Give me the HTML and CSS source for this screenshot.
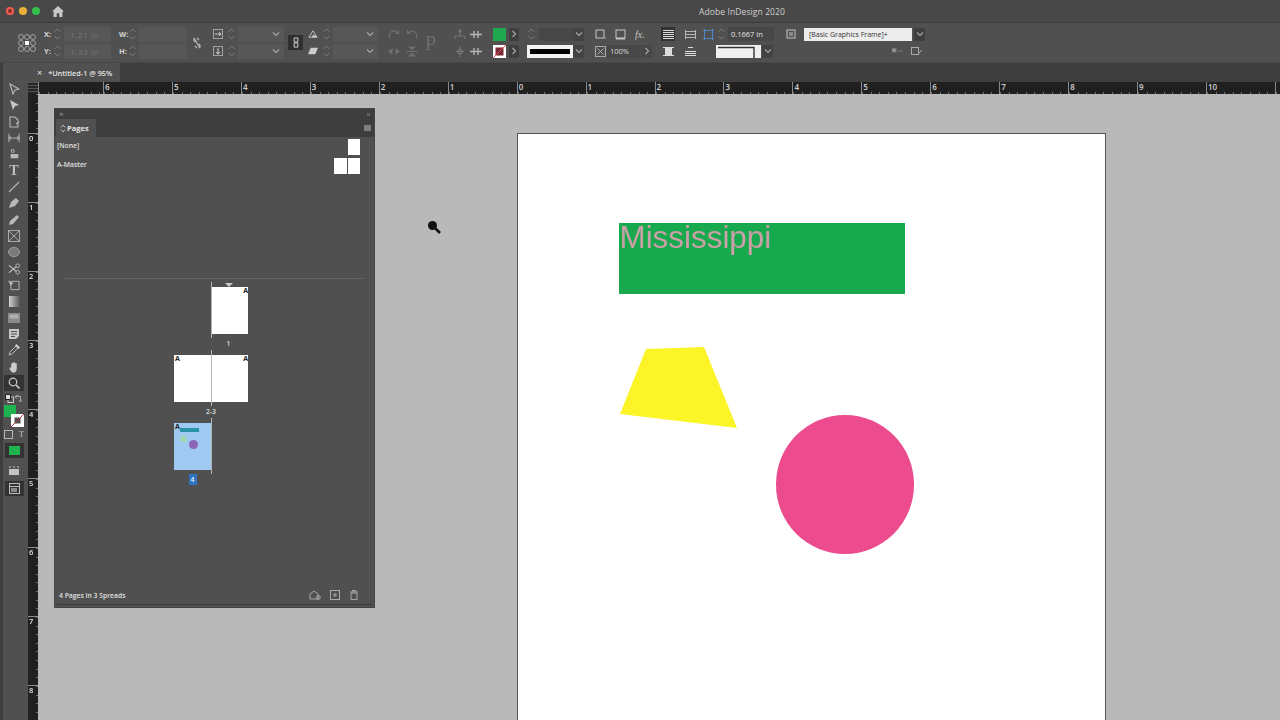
FILE: index.html
```html
<!DOCTYPE html>
<html lang="en">
<head>
<meta charset="utf-8">
<title>Adobe InDesign 2020</title>
<link rel="stylesheet" href="styles.css">
</head>
<body>
<svg class="defs" width="0" height="0" aria-hidden="true">
  <defs>
    <symbol id="chev" viewBox="0 0 8 8"><path d="M1 2.5 4 5.5 7 2.5" fill="none" stroke="currentColor" stroke-width="1.2"/></symbol>
    <symbol id="next" viewBox="0 0 8 8"><path d="M2.5 1 5.5 4 2.5 7" fill="none" stroke="currentColor" stroke-width="1.2"/></symbol>
    <symbol id="spin" viewBox="0 0 9 14"><path d="M1.5 5 4.5 2 7.5 5M1.5 9 4.5 12 7.5 9" fill="none" stroke="currentColor" stroke-width="1"/></symbol>
  </defs>
</svg>

<div class="app">
<header class="titlebar">
  <div class="lights"><i class="light red"></i><i class="light amber"></i><i class="light green"></i></div>
  <svg class="home" viewBox="0 0 12 11"><path d="M6 0 12 5.500H10.400V11H7.300V7.300H4.700V11H1.600V5.500H0Z" fill="#c8c8c8"/></svg>
  <div class="apptitle">Adobe InDesign 2020</div>
</header>

<section class="control">
  <svg class="refpoint" viewBox="0 0 18 18">
    <g fill="none" stroke="#a0a0a0" stroke-width="1"><circle cx="3" cy="3" r="2.500"/><circle cx="9" cy="3" r="2.500"/><circle cx="15" cy="3" r="2.500"/><circle cx="3" cy="9" r="2.500"/><circle cx="15" cy="9" r="2.500"/><circle cx="3" cy="15" r="2.500"/><circle cx="9" cy="15" r="2.500"/><circle cx="15" cy="15" r="2.500"/></g>
    <rect x="7" y="7" width="4" height="4" fill="#fff"/>
  </svg>

  <div class="col g-xy">
    <div class="row"><b class="lab">X:</b><svg class="spin"><use href="#spin"/></svg><span class="field dim w-47">-1.21 in</span></div>
    <div class="row"><b class="lab">Y:</b><svg class="spin"><use href="#spin"/></svg><span class="field dim w-47">-1.33 in</span></div>
  </div>
  <div class="col g-wh">
    <div class="row"><b class="lab">W:</b><svg class="spin"><use href="#spin"/></svg><span class="field w-48"></span></div>
    <div class="row"><b class="lab">H:</b><svg class="spin"><use href="#spin"/></svg><span class="field w-48"></span></div>
  </div>
  <svg class="unlink" viewBox="0 0 10 12"><path d="M2 1 8 11M3 1C1 2 2 4 3 5M7 11C9 10 8 8 7 7M7 3 5 1M3 9 5 11" fill="none" stroke="#b5b5b5" stroke-width="1.300"/></svg>
  <div class="col g-scale">
    <div class="row"><svg class="ic10" viewBox="0 0 11 11"><rect x=".5" y=".5" width="10" height="10" fill="none" stroke="#aaa"/><path d="M2 5.500H8M6.500 3.500 9 5.500 6.500 7.500" fill="none" stroke="#ddd"/></svg><svg class="spin gap4"><use href="#spin"/></svg><span class="field w-46 chev"><svg class="chv"><use href="#chev"/></svg></span></div>
    <div class="row"><svg class="ic10" viewBox="0 0 11 11"><rect x=".5" y=".5" width="10" height="10" fill="none" stroke="#aaa"/><path d="M5.500 2V8M3.500 6.500 5.500 9 7.500 6.500" fill="none" stroke="#ddd"/></svg><svg class="spin gap4"><use href="#spin"/></svg><span class="field w-46 chev"><svg class="chv"><use href="#chev"/></svg></span></div>
  </div>
  <div class="chain"><svg viewBox="0 0 6 12"><path d="M1 1H5V5.500H1ZM1 6.500H5V11H1Z" fill="none" stroke="#ddd"/></svg></div>
  <div class="col g-shear">
    <div class="row"><svg class="ic10" viewBox="0 0 11 11"><path d="M1 9 5.500 2 10 9Z" fill="none" stroke="#ccc"/><path d="M6 6 10 9H4Z" fill="#ccc"/></svg><svg class="spin gap4"><use href="#spin"/></svg><span class="field w-45 chev"><svg class="chv"><use href="#chev"/></svg></span></div>
    <div class="row"><svg class="ic10" viewBox="0 0 11 11"><path d="M3 2H11L8 9H0Z" fill="#ccc"/></svg><svg class="spin gap4"><use href="#spin"/></svg><span class="field w-45 chev"><svg class="chv"><use href="#chev"/></svg></span></div>
  </div>

  <div class="col g-rot">
    <div class="row gap6"><svg class="ic12" viewBox="0 0 12 11"><path d="M1.500 9V6C1.500 3 5 1 8 2.500L10 4M10.500 1V4.500H7" fill="none" stroke="#6f6f6f" stroke-width="1.200"/></svg><svg class="ic12" viewBox="0 0 12 11"><path d="M10.500 9V6C10.500 3 7 1 4 2.500L2 4M1.500 1V4.500H5" fill="none" stroke="#6f6f6f" stroke-width="1.200"/></svg></div>
    <div class="row gap6"><svg class="ic12" viewBox="0 0 12 11"><path d="M4.500 2V9L0 5.500ZM7.500 2V9L12 5.500Z" fill="#6f6f6f"/></svg><svg class="ic12" viewBox="0 0 12 11"><path d="M2 .5H10L6 4.500ZM2 10.500H10L6 6.500Z" fill="#6f6f6f"/><path d="M0 5.500H12" stroke="#6f6f6f"/></svg></div>
  </div>
  <div class="glyph-p">P</div>
  <div class="col g-dist">
    <div class="row gap4r"><svg class="ic12" viewBox="0 0 12 11"><path d="M6 0V3M1 10V7H11V10M6 3V7" fill="none" stroke="#777"/><circle cx="6" cy="2" r="1.500" fill="#777"/></svg><svg class="ic12" viewBox="0 0 12 11"><path d="M0 5.500H12M4 2V9M8 2V9" fill="none" stroke="#b5b5b5" stroke-width="1.400"/></svg></div>
    <div class="row gap4r"><svg class="ic12" viewBox="0 0 12 11"><path d="M6 0V11M2 5.500H10" fill="none" stroke="#777"/><circle cx="6" cy="5.500" r="2.500" fill="none" stroke="#777"/></svg><svg class="ic12" viewBox="0 0 12 11"><path d="M0 5.500H12M4 2V9M8 2V9" fill="none" stroke="#b5b5b5" stroke-width="1.400"/></svg></div>
  </div>
  <div class="col g-swatch">
    <div class="row gap3"><i class="swatch fill"></i><span class="nextbox"><svg class="chv"><use href="#next"/></svg></span></div>
    <div class="row gap3"><svg class="swatch stroke" viewBox="0 0 13 13"><rect width="13" height="13" fill="#fff"/><rect x="2.500" y="2.500" width="8" height="8" fill="#7c2a36"/><path d="M0 13 13 0" stroke="#e04a4a"/></svg><span class="nextbox"><svg class="chv"><use href="#next"/></svg></span></div>
  </div>
  <div class="col g-stroke">
    <div class="row"><svg class="spin mr3"><use href="#spin"/></svg><span class="field w-34"></span><span class="chevbox"><svg class="chv"><use href="#chev"/></svg></span></div>
    <div class="row"><span class="strokepick"><i></i></span><span class="chevbox"><svg class="chv"><use href="#chev"/></svg></span></div>
  </div>
  <div class="col g-fx">
    <div class="row gap9"><svg class="ic11" viewBox="0 0 11 11"><rect x="1" y="1" width="8" height="8" fill="none" stroke="#c4c4c4"/><path d="M10 9H11" stroke="#c4c4c4"/></svg><svg class="ic11" viewBox="0 0 11 11"><rect x="1" y="1" width="9" height="8" fill="none" stroke="#c4c4c4"/><path d="M1 9H10V10.500H1Z" fill="#c4c4c4"/></svg><i class="fx">fx.</i></div>
    <div class="row"><svg class="ic11" viewBox="0 0 11 11"><rect x=".5" y=".5" width="10" height="10" fill="none" stroke="#aaa"/><path d="M2.500 2.500 8.500 8.500M8.500 2.500 2.500 8.500" stroke="#aaa"/></svg><span class="field pct">100%</span><span class="nextbox slim"><svg class="chv"><use href="#next"/></svg></span></div>
  </div>
  <div class="col g-wrap">
    <div class="row gap8"><span class="wrapbtn on"><svg viewBox="0 0 11 9"><path d="M0 .5H11M0 2.500H11M0 4.500H11M0 6.500H11M0 8.500H11" stroke="#ddd"/></svg></span><span class="wrapbtn"><svg viewBox="0 0 11 9"><path d="M.5 0V9M10.500 0V9M0 1.500H11M0 4.500H11M0 7.500H11" stroke="#b5b5b5"/></svg></span></div>
    <div class="row gap8"><span class="wrapbtn"><svg viewBox="0 0 11 9"><rect x="2" y="1" width="7" height="7" fill="#ddd"/><path d="M0 .5H11M0 8.500H11" stroke="#ddd"/></svg></span><span class="wrapbtn"><svg viewBox="0 0 11 9"><path d="M3 .5H8M0 4.500H11M0 6.500H11M0 8.500H11" stroke="#ddd"/></svg></span></div>
  </div>
  <div class="col g-inset">
    <div class="row"><svg class="ic11" viewBox="0 0 11 11"><rect x="1.500" y="1.500" width="8" height="8" fill="none" stroke="#4e88c4"/><path d="M0 1.500H3M8 1.500H11M0 9.500H3M8 9.500H11M1.500 0V3M9.500 0V3M1.500 8V11M9.500 8V11" stroke="#4e88c4"/></svg><svg class="spin gap3l"><use href="#spin"/></svg><span class="field val">0.1667 in</span></div>
    <div class="row"><span class="cornerpick"><svg viewBox="0 0 45 13"><path d="M2 2.500H38V13" fill="none" stroke="#333" stroke-width="1.400"/></svg></span><span class="chevbox"><svg class="chv"><use href="#chev"/></svg></span></div>
  </div>
  <div class="col g-style">
    <div class="row"><svg class="ic11" viewBox="0 0 11 11"><rect x="1" y="1" width="8" height="8" fill="none" stroke="#c4c4c4"/><rect x="3" y="3" width="4" height="4" fill="#8a8a8a"/></svg><span class="stylebox">[Basic Graphics Frame]+</span><span class="chevbox dark"><svg class="chv"><use href="#chev"/></svg></span></div>
    <div class="row endrow"><svg class="ic12" viewBox="0 0 12 9"><path d="M0 1.500H4V5H0ZM6 4H11" fill="#9a9a9a" stroke="#777"/></svg><svg class="ic12" viewBox="0 0 12 9"><rect x=".5" y=".5" width="7" height="7" fill="none" stroke="#aaa"/><path d="M8 6 11 3" stroke="#aaa"/></svg></div>
  </div>
</section>

<div class="workspace">
  <aside class="toolbar">
    <div class="grip"></div>
    <div class="tools">
      <div class="tool"><svg viewBox="0 0 12 12"><path d="M2 1 11 6 7 7 5 11Z" fill="none" stroke="#b8b8b8" stroke-width="1.100"/></svg></div>
      <div class="tool"><svg viewBox="0 0 12 12"><path d="M2 1 11 6 7 7 5 11Z" fill="#c8c8c8"/></svg></div>
      <div class="tool"><svg viewBox="0 0 12 12"><path d="M2 1H7L10 4V11H2ZM8 8 11 6" fill="none" stroke="#b8b8b8" stroke-width="1.100"/></svg></div>
      <div class="tool"><svg viewBox="0 0 14 12"><path d="M1 1V11M13 1V11M1 6H13M3.500 4 1 6 3.500 8M10.500 4 13 6 10.500 8" fill="none" stroke="#b8b8b8" stroke-width="1.100"/></svg></div>
      <div class="tool"><svg viewBox="0 0 14 12"><path d="M3 6H12V11H3Z" fill="#b8b8b8"/><path d="M4 1H7V4H4Z" fill="none" stroke="#b8b8b8"/></svg></div>
      <div class="tool type">T</div>
      <div class="tool"><svg viewBox="0 0 12 12"><path d="M1 11 11 1" stroke="#b8b8b8" stroke-width="1.100"/></svg></div>
      <div class="tool"><svg viewBox="0 0 12 12"><path d="M1 11 3 5 8 1 11 4 7 9Z" fill="#b8b8b8"/></svg></div>
      <div class="tool"><svg viewBox="0 0 12 12"><path d="M1 11 2 7 9 1 11 3 5 10Z" fill="#b8b8b8"/></svg></div>
      <div class="tool"><svg viewBox="0 0 12 12"><rect x=".5" y=".5" width="11" height="11" fill="none" stroke="#a8a8a8"/><path d="M.5 .5 11.500 11.500M11.500 .5 .5 11.500" stroke="#a8a8a8"/></svg></div>
      <div class="tool"><svg viewBox="0 0 13 11"><ellipse cx="6.500" cy="5.500" rx="6" ry="5" fill="#7a7a7a" stroke="#a0a0a0"/></svg></div>
      <div class="tool"><svg viewBox="0 0 13 12"><circle cx="10.500" cy="2.500" r="2" fill="none" stroke="#b8b8b8"/><circle cx="10.500" cy="9.500" r="2" fill="none" stroke="#b8b8b8"/><path d="M1 2 9 8.500M1 10 9 3.500" stroke="#c8c8c8" stroke-width="1.200"/></svg></div>
      <div class="tool"><svg viewBox="0 0 13 12"><path d="M3 2H12V11H3Z" fill="none" stroke="#b8b8b8"/><path d="M0 1 6 4 4 5 3.500 7Z" fill="#c8c8c8"/></svg></div>
      <div class="tool"><i class="grad"></i></div>
      <div class="tool"><svg viewBox="0 0 12 10"><rect width="12" height="10" fill="#8b8b8b"/><rect x="1.500" y="1.500" width="9" height="4" fill="#b0b0b0"/></svg></div>
      <div class="tool"><svg viewBox="0 0 12 12"><path d="M1 1H11V8L8 11H1Z" fill="#c8c8c8"/><path d="M3 3.500H9M3 6H9M3 8.500H7" stroke="#505050"/></svg></div>
      <div class="tool"><svg viewBox="0 0 12 12"><path d="M1 11 2 8 8 2 10 4 4 10Z" fill="none" stroke="#b8b8b8"/><path d="M7 1.500 8.500 0 12 3.500 10.500 5Z" fill="#c8c8c8"/></svg></div>
      <div class="tool"><svg viewBox="0 0 12 13"><path d="M3 7V2.500H4.500V6.500V1.500H6V6.500V1.500H7.500V6.500V2.500H9V8C9 11 7.500 12.500 5.500 12.500 3.500 12.500 2.500 11 1 8L1.500 7Z" fill="#cccccc"/></svg></div>
      <div class="tool on"><svg viewBox="0 0 12 12"><circle cx="5" cy="5" r="3.800" fill="none" stroke="#c8c8c8" stroke-width="1.200"/><path d="M8 8 11.500 11.500" stroke="#c8c8c8" stroke-width="1.600"/></svg></div>
    </div>
    <div class="defaults">
      <svg class="ic9" viewBox="0 0 9 9"><rect x="3" y="3" width="5.500" height="5.500" fill="none" stroke="#ccc"/><rect x=".5" y=".5" width="5" height="5" fill="#ddd" stroke="#222"/></svg>
      <svg class="ic9" viewBox="0 0 9 9"><path d="M1 2.500H6.500V8M4.500 1 1 2.500 2.500 4.500M5 6.500 6.500 8 8 6.500" fill="none" stroke="#aaa"/></svg>
    </div>
    <div class="fillstroke">
      <svg class="strokebox" viewBox="0 0 13 13"><rect width="13" height="13" fill="#fff"/><rect x="3.500" y="3.500" width="6" height="6" fill="#505050"/><path d="M0 13 13 0" stroke="#b8373f"/></svg>
      <i class="fillbox"></i>
    </div>
    <div class="mode">
      <svg class="ic9" viewBox="0 0 9 9"><rect x=".5" y=".5" width="8" height="8" fill="none" stroke="#b5b5b5"/></svg>
      <span class="modet">T</span>
    </div>
    <div class="applybox"><i></i></div>
    <div class="screen"><svg viewBox="0 0 12 10"><path d="M1 1H3M5 1H7M9 1H11" stroke="#c4c4c4"/><rect x="1" y="3" width="10" height="6" fill="#c4c4c4"/></svg></div>
    <div class="viewbox"><svg viewBox="0 0 11 11"><rect x=".5" y=".5" width="10" height="10" fill="none" stroke="#bbb"/><path d="M.5 3.500H10.500" stroke="#bbb"/><rect x="2" y="5" width="6" height="4" fill="#888"/></svg></div>
  </aside>

  <div class="main">
    <div class="tabs">
      <div class="tab"><span class="tabx">×</span><span>*Untitled-1 @ 95%</span></div>
    </div>
    <div class="hruler">
      <div class="corner"></div>
      <div class="hcell first"></div>
      <div class="hcell"><span>6</span></div><div class="hcell"><span>5</span></div><div class="hcell"><span>4</span></div><div class="hcell"><span>3</span></div><div class="hcell"><span>2</span></div><div class="hcell"><span>1</span></div><div class="hcell"><span>0</span></div><div class="hcell"><span>1</span></div><div class="hcell"><span>2</span></div><div class="hcell"><span>3</span></div><div class="hcell"><span>4</span></div><div class="hcell"><span>5</span></div><div class="hcell"><span>6</span></div><div class="hcell"><span>7</span></div><div class="hcell"><span>8</span></div><div class="hcell"><span>9</span></div><div class="hcell"><span>10</span></div><div class="hcell"></div>
    </div>
    <div class="stage">
      <div class="vruler">
        <div class="vcell first"></div>
        <div class="vcell">0</div><div class="vcell">1</div><div class="vcell">2</div><div class="vcell">3</div><div class="vcell">4</div><div class="vcell">5</div><div class="vcell">6</div><div class="vcell">7</div><div class="vcell">8</div>
      </div>
      <div class="canvas">
        <div class="page">
          <div class="frame">Mississippi</div>
          <svg class="trap" viewBox="0 0 118 82"><polygon points="27,2 85,0 118,81 1,67" fill="#fbf427"/></svg>
          <div class="circle"></div>
        </div>

        <div class="panel">
          <div class="panelhead"><span class="px">×</span><span class="pgrip">ıı</span></div>
          <div class="paneltabs">
            <div class="ptab"><svg class="updown" viewBox="0 0 6 9"><path d="M1 3.500 3 1 5 3.500M1 5.500 3 8 5 5.500" fill="none" stroke="#c4c4c4" stroke-width=".9"/></svg>Pages</div>
            <i class="pmenu"></i>
          </div>
          <div class="masters">
            <div class="master"><span>[None]</span><div class="mpages"><i class="mp"></i></div></div>
            <div class="master"><span>A-Master</span><div class="mpages"><i class="mp"></i><i class="mp"></i></div></div>
          </div>
          <div class="divider"></div>
          <div class="spreads">
            <div class="spread s1">
              <div class="slot"></div>
              <div class="slot"><div class="thumb"><em class="tr">A</em><i class="marker"></i></div></div>
            </div>
            <div class="plabel s1l">1</div>
            <div class="spread">
              <div class="slot"><div class="thumb"><em class="tl">A</em></div></div>
              <div class="slot"><div class="thumb"><em class="tr">A</em></div></div>
            </div>
            <div class="plabel">2-3</div>
            <div class="spread">
              <div class="slot"><div class="thumb blue"><em class="tl">A</em><i class="mini-bar"></i><i class="mini-tri"></i><i class="mini-dot"></i></div></div>
              <div class="slot"></div>
            </div>
            <div class="plabel l4"><span>4</span></div>
          </div>
          <div class="panelfoot">
            <span>4 Pages in 3 Spreads</span>
            <div class="footicons">
              <svg viewBox="0 0 12 10"><path d="M1 9V4L5 1 9 4V9ZM8 6H11V9H8Z" fill="none" stroke="#a8a8a8"/></svg>
              <svg viewBox="0 0 10 10"><rect x=".5" y=".5" width="9" height="9" fill="none" stroke="#a8a8a8"/><path d="M3 5H7M5 3V7" stroke="#a8a8a8"/></svg>
              <svg viewBox="0 0 10 10"><path d="M1 2H9M3.500 2V.5H6.500V2M2 3V9.500H8V3Z" fill="none" stroke="#a8a8a8"/></svg>
            </div>
          </div>
          <div class="panelgrip"></div>
        </div>

        <svg class="cursor" viewBox="0 0 14 14"><circle cx="5.500" cy="5.500" r="4.500" fill="#111"/><path d="M8.500 8.500 13 13" stroke="#111" stroke-width="2.600"/></svg>
      </div>
    </div>
  </div>
</div>
</div>
</body>
</html>
```

FILE: styles.css
```css
* { box-sizing: border-box; }
html, body { margin: 0; height: 100%; }
body {
  width: 1280px; height: 720px; overflow: hidden;
  background: #505050; color: #d8d8d8;
  font-family: "Open Sans", "Liberation Sans", sans-serif;
}
.app { width: 1280px; height: 720px; display: flex; flex-direction: column; filter: blur(.5px); }
svg { display: block; flex: none; }
.defs { position: absolute; }

.titlebar { height: 23px; flex: none; background: #484848; border-bottom: 1px solid #3a3a3a; display: flex; align-items: center; }
.lights { display: flex; gap: 5px; margin-left: 6px; }
.light { width: 8px; height: 8px; border-radius: 50%; display: block; }
.red { background: #ee5f57; box-shadow: inset 0 0 0 2px #ee5f57, inset 0 0 0 4px #8c2a2a; }
.amber { background: #e9b13a; }
.green { background: #36c04c; }
.home { width: 12px; height: 11px; margin-left: 12px; }
.apptitle { margin-left: 635px; font-size: 8.500px; color: #d0d0d0; letter-spacing: .1px; }

.control { height: 40px; flex: none; background: #505050; display: flex; align-items: center; border-bottom: 1px solid #474747; padding-left: 18px; font-size: 7.500px; }
.refpoint { width: 18px; height: 18px; }
.col { display: flex; flex-direction: column; height: 34px; flex: none; }
.row { display: flex; align-items: center; height: 17px; }
.lab { width: 9px; font-size: 7.500px; color: #d6d6d6; }
.spin { width: 9px; height: 14px; color: #7c7c7c; margin-right: 2px; }
.gap4 { margin-left: 4px; }
.gap3l { margin-left: 3px; }
.mr3 { margin-right: 3px; }
.field { height: 15px; background: #575757; display: flex; align-items: center; padding-left: 3px; color: #ddd; flex: none; }
.dim { color: #767676; font-size: 8px; letter-spacing: .6px; }
.w-47 { width: 47px; }
.w-48 { width: 48px; }
.w-46 { width: 46px; }
.w-45 { width: 45px; }
.w-34 { width: 34px; height: 13px; background: #474747; }
.chev { justify-content: flex-end; padding-right: 4px; }
.chv { width: 8px; height: 8px; color: #a5a5a5; }
.g-xy { margin-left: 8px; }
.g-wh { margin-left: 8px; }
.unlink { width: 10px; height: 12px; margin-left: 5px; }
.g-scale { margin-left: 11px; }
.ic10 { width: 10px; height: 10px; }
.ic11 { width: 11px; height: 11px; }
.ic12 { width: 12px; height: 11px; }
.ic9 { width: 9px; height: 9px; }
.chain { width: 15px; height: 15px; background: #2f2f2f; margin-left: 4px; display: flex; align-items: center; justify-content: center; }
.chain svg { width: 6px; height: 11px; }
.g-shear { margin-left: 5px; }
.g-rot { margin-left: 10px; }
.gap6 { gap: 6px; }
.gap4r { gap: 4px; }
.gap3 { gap: 3px; }
.gap8 { gap: 8px; }
.gap9 { gap: 9px; }
.glyph-p { width: 17px; margin-left: 7px; font-family: "Liberation Serif", serif; font-size: 20px; color: #6c6c6c; line-height: 1; }
.g-dist { margin-left: 12px; }
.swatch { width: 13px; height: 13px; display: block; }
.swatch.fill { background: #1fa84f; }
.nextbox { width: 10px; height: 13px; background: #3f3f3f; display: flex; align-items: center; justify-content: center; }
.g-swatch { margin-left: 11px; }
.g-stroke { margin-left: 8px; }
.chevbox { width: 11px; height: 13px; background: #434343; display: flex; align-items: center; justify-content: center; flex: none; }
.strokepick { width: 46px; height: 13px; background: #f3f3f3; display: flex; align-items: center; padding: 0 3px; flex: none; }
.strokepick i { display: block; width: 100%; height: 5px; background: #000; }
.g-fx { margin-left: 11px; }
.fx { font-family: "Liberation Serif", serif; font-size: 10px; color: #c4c4c4; }
.pct { width: 33px; margin-left: 1px; background: #474747; height: 13px; }
.nextbox.slim { width: 11px; margin-left: 1px; background: #474747; }
.g-wrap { margin-left: 9px; }
.wrapbtn { width: 14px; height: 14px; display: flex; align-items: center; justify-content: center; }
.wrapbtn.on { background: #333; }
.wrapbtn svg { width: 11px; height: 9px; }
.g-inset { margin-left: 6px; }
.val { width: 46px; height: 14px; background: #474747; color: #e4e4e4; }
.cornerpick { width: 45px; height: 13px; background: #f0f0f0; margin-left: 13px; margin-right: 1px; display: block; flex: none; }
.cornerpick svg { width: 45px; height: 13px; }
.g-style { margin-left: 12px; width: 139px; }
.stylebox { width: 108px; height: 13px; margin-left: 7px; background: #ededed; color: #333; display: flex; align-items: center; padding-left: 5px; font-size: 7px; flex: none; }
.chevbox.dark { margin-left: 2px; background: #3f3f3f; }
.endrow { justify-content: flex-end; gap: 7px; padding-right: 2px; }

.workspace { flex: 1; display: flex; min-height: 0; }
.toolbar { width: 28px; flex: none; background: #505050; border-left: 3px solid #3e3e3e; display: flex; flex-direction: column; align-items: center; padding-right: 3px; }
.grip { height: 18px; flex: none; }
.tools { display: flex; flex-direction: column; width: 100%; }
.tool { height: 16.330px; display: flex; align-items: center; justify-content: center; font-family: "Liberation Serif", serif; font-size: 14px; font-weight: 700; color: #c0c0c0; }
.tool svg { width: 12px; height: 12px; }
.tool.on { background: #333; margin: 0 1px; }
.grad { width: 11px; height: 11px; display: block; background: linear-gradient(90deg, #d0d0d0, #555); }
.defaults { width: 100%; display: flex; justify-content: space-between; padding: 0 2px; margin-top: 3px; }
.fillstroke { width: 20px; height: 22px; margin-top: 2px; position: relative; }
.fillbox { display: block; width: 12px; height: 12px; background: #1fb34f; }
.strokebox { position: absolute; right: 0; bottom: 0; width: 13px; height: 13px; }
.mode { display: flex; gap: 6px; align-items: center; margin-top: 2px; height: 10px; }
.modet { font-size: 8px; color: #c4c4c4; font-family: "Liberation Serif", serif; }
.applybox { width: 19px; height: 15px; background: #333; margin-top: 4px; display: flex; align-items: center; justify-content: center; }
.applybox i { display: block; width: 11px; height: 9px; background: #1fb34f; }
.screen { margin-top: 8px; }
.screen svg { width: 12px; height: 10px; }
.viewbox { width: 19px; height: 15px; background: #333; margin-top: 5px; display: flex; align-items: center; justify-content: center; }
.viewbox svg { width: 11px; height: 11px; }

.main { flex: 1; min-width: 0; display: flex; flex-direction: column; }
.tabs { height: 19px; flex: none; background: #3e3e3e; display: flex; }
.tab { width: 92px; background: #505050; display: flex; align-items: center; font-size: 7.300px; font-weight: 600; color: #e2e2e2; padding-left: 9px; gap: 6px; }
.tabx { font-size: 9px; font-weight: 400; }

.hruler { height: 12px; flex: none; background: #202020; display: flex; color: #d2d2d2; font-size: 8px; font-weight: 600; overflow: hidden; }
.corner { width: 10px; flex: none; background: repeating-linear-gradient(180deg, #555 0 1px, #262626 1px 3px); }
.hcell { width: 68.950px; flex: none; height: 12px; padding-left: 1px; line-height: 9px; border-left: 1px solid #8a8a8a;
  background: repeating-linear-gradient(90deg, #6e6e6e 0 1px, transparent 1px 8.620px) 0 100% / 100% 2px no-repeat; }
.hcell.first { width: 65px; }

.stage { flex: 1; display: flex; min-height: 0; }
.vruler { width: 10px; flex: none; background: #202020; font-size: 7.500px; color: #e2e2e2; font-weight: 600; overflow: hidden; }
.vcell { height: 68.950px; border-top: 1px solid #8a8a8a; padding: 0 0 0 1px; line-height: 9px;
  background: repeating-linear-gradient(180deg, #6e6e6e 0 1px, transparent 1px 8.620px) 100% 0 / 2px 100% no-repeat; }
.vcell.first { height: 39px; border-top: 0; }

.canvas { flex: 1; position: relative; background: #b9b9b9; overflow: hidden; padding: 39px 0 0 479px; }
.page { width: 589px; height: 700px; background: #fff; border: 1px solid #555; position: relative; }
.frame { position: absolute; left: 100.500px; top: 89px; width: 286.500px; height: 71px; background: #18a94e; color: #c9a0a6; font-family: "Liberation Sans", sans-serif; font-size: 31.400px; line-height: 30px; padding-left: 1px; }
.trap { position: absolute; left: 101px; top: 213px; width: 118px; height: 82px; }
.circle { position: absolute; left: 257.500px; top: 281px; width: 138.500px; height: 139px; border-radius: 50%; background: #ec4b8e; }
.cursor { position: absolute; left: 389px; top: 126px; width: 14px; height: 14px; }

.panel { position: absolute; left: 16px; top: 14px; width: 321px; height: 500px; background: #505050; border: 1px solid #454545; padding-bottom: 2px; display: flex; flex-direction: column; }
.panelhead { height: 10px; flex: none; background: #3e3e3e; display: flex; justify-content: space-between; align-items: center; padding: 0 4px; color: #a0a0a0; font-size: 8px; line-height: 10px; }
.pgrip { font-size: 6px; }
.paneltabs { height: 18px; flex: none; background: #3e3e3e; display: flex; justify-content: space-between; align-items: center; padding-right: 3px; }
.ptab { width: 40px; height: 18px; margin-left: 1px; background: #505050; display: flex; align-items: center; padding-left: 4px; gap: 1px; font-size: 7.500px; font-weight: 700; color: #e4e4e4; }
.updown { width: 6px; height: 9px; }
.pmenu { display: block; width: 7px; height: 6px; background: #808080; }
.masters { height: 141px; flex: none; padding: 2px 14px 0 2px; display: flex; flex-direction: column; gap: 3px; }
.master { display: flex; justify-content: space-between; align-items: center; height: 16px; font-size: 6.800px; font-weight: 600; color: #e0e0e0; }
.master span { margin-bottom: 4px; }
.mpages { display: flex; gap: 1px; }
.mp { display: block; width: 12.500px; height: 16px; background: #fff; }
.divider { height: 1px; flex: none; margin: 0 9px 0 10px; background: #636363; }
.spreads { flex: 1; display: flex; flex-direction: column; padding: 8px 0 0 119px; }
.spread { display: flex; height: 47px; flex: none; position: relative; }
.spread::after { content: ""; position: absolute; left: 37px; top: -5px; bottom: -4px; width: 1px; background: #b4b4b4; }
.slot { width: 37px; height: 47px; }
.thumb { width: 37px; height: 47px; background: #fff; position: relative; }
.thumb em { position: absolute; top: 0; font-style: normal; font-size: 7px; font-weight: 700; line-height: 8px; color: #222; }
.tr { right: 0; }
.tl { left: 1px; }
.marker { position: absolute; left: 14px; top: -4px; border: 4px solid transparent; border-top: 4px solid #c8c8c8; border-bottom: 0; }
.blue { background: #a0c9f2; }
.mini-bar { position: absolute; left: 6px; top: 5px; width: 19px; height: 4px; background: #2b93a8; }
.mini-tri { position: absolute; left: 6px; top: 13px; width: 7px; height: 6px; background: #a7d8a8; clip-path: polygon(20% 0, 70% 0, 100% 100%, 0 85%); }
.mini-dot { position: absolute; left: 15px; top: 17px; width: 9px; height: 9px; border-radius: 50%; background: #8c64b6; }
.plabel { height: 21px; flex: none; width: 74px; text-align: center; font-size: 6.800px; font-weight: 600; color: #dcdcdc; line-height: 20px; }
.s1l { padding-left: 35px; }
.plabel.l4 { width: 37px; padding-left: 0; display: flex; justify-content: center; align-items: center; height: 17px; padding-top: 1px; color: #e8f2ff; }
.l4 span { display: block; width: 8px; height: 11px; background: #2f74c0; line-height: 11px; }
.panelfoot { height: 18px; flex: none; display: flex; justify-content: space-between; align-items: center; padding: 0 15px 0 4px; font-size: 6.800px; font-weight: 600; color: #e0e0e0; }
.footicons { display: flex; gap: 9px; align-items: center; }
.footicons svg { width: 10px; height: 10px; }
.footicons svg:first-child { width: 12px; }
.panelgrip { height: 1px; flex: none; margin: 0 2px; background: #3a3a3a; }
```
